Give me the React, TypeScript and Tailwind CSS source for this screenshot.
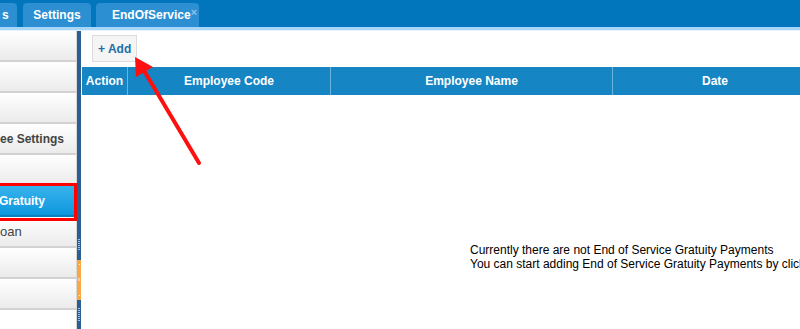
const menuItems = [
  { label: '', active: false },
  { label: '', active: false },
  { label: '', active: false },
  { label: 'ee Settings', active: false },
  { label: '', active: false },
  { label: 'Gratuity', active: true },
  { label: 'oan', active: false },
  { label: '', active: false },
  { label: '', active: false },
];

const columns = [
  { title: 'Action', width: 'w-[45px]' },
  { title: 'Employee Code', width: 'w-[203px]' },
  { title: 'Employee Name', width: 'w-[282px]' },
  { title: 'Date', width: 'w-[205px]' },
];

export default function App() {
  return (
    <div className="relative w-[800px] h-[329px] overflow-hidden bg-white font-['Liberation_Sans',Arial,sans-serif] text-[12px]">
      {/* tab strip */}
      <div className="h-[27px] bg-[#0276bd] flex items-end gap-[5px]">
        <div className="w-[17px] h-[24px] shrink-0 bg-[#2b8fd2] rounded-tr-[4px] flex items-center text-white font-bold overflow-hidden">
          <span className="ml-[2px]">s</span>
        </div>
        <div className="ml-[1px] w-[68px] h-[24px] shrink-0 bg-[#2b8fd2] rounded-t-[4px] flex items-center justify-center text-white font-bold">
          Settings
        </div>
        <div className="w-[103px] h-[24px] shrink-0 bg-[#2b8fd2] rounded-t-[4px] flex items-center text-white font-bold">
          <span className="ml-[16px]">EndOfService</span>
          <span className="ml-auto mr-[4px] mb-[6px] text-[11px] leading-none text-[#8cc3e8]">×</span>
        </div>
      </div>
      <div className="h-[3px] bg-[#a8d6f6]" />
      <div className="h-[1px] bg-[#e6f3fc]" />

      <div className="flex h-[298px]">
        {/* side menu */}
        <div className="w-[77px] shrink-0 border-r border-[#d8d8d8] flex flex-col">
          {menuItems.map((item, i) => (
            <div
              key={i}
              className={
                item.active
                  ? 'h-[31px] bg-gradient-to-b from-[#35b3ec] to-[#0a97de] border-b-2 border-[#0a7fc0] flex items-center text-white font-bold text-[12px] whitespace-nowrap overflow-hidden'
                  : 'h-[31px] bg-gradient-to-b from-white to-[#ebebeb] border-b-2 border-[#d3d1d1] flex items-center text-[#444] font-bold text-[12px] whitespace-nowrap overflow-hidden'
              }
            >
              {item.label === 'oan' ? (
                <span className="font-normal text-[#444] text-[13px]">{item.label}</span>
              ) : item.active ? (
                <span className="-ml-[1px]">{item.label}</span>
              ) : (
                item.label
              )}
            </div>
          ))}
        </div>

        {/* splitter */}
        <div className="w-[4px] shrink-0 bg-[#2c5e90] flex flex-col items-center">
          <div className="mt-[208px] h-[12px] w-[2px] bg-[repeating-linear-gradient(to_bottom,#9cc4e8_0px,#9cc4e8_1px,transparent_1px,transparent_2px)]" />
          <div className="mt-[9px] h-[40px] w-[4px] bg-[#f7a945] flex flex-col items-center justify-between py-[4px]">
            <div className="w-[1px] h-[1px] bg-white" />
            <div className="text-white text-[8px] leading-none">‹</div>
            <div className="w-[1px] h-[1px] bg-white" />
          </div>
          <div className="mt-[8px] h-[14px] w-[2px] bg-[repeating-linear-gradient(to_bottom,#9cc4e8_0px,#9cc4e8_1px,transparent_1px,transparent_2px)]" />
        </div>

        {/* content */}
        <div className="flex-1 min-w-0 overflow-hidden flex flex-col">
          <div className="pt-[4px] pl-[11px]">
            <button className="h-[27px] px-[5px] bg-[#f5f5f5] border border-[#dcdcdc] text-[#1d6ea9] font-bold text-[12px]">
              + Add
            </button>
          </div>
          <div className="mt-[5px] ml-[1px] flex h-[28px] bg-[#1585c4] text-white font-bold">
            {columns.map((c, i) => (
              <div
                key={c.title}
                className={`${c.width} shrink-0 flex items-center justify-center ${i > 0 ? 'border-l border-[#6bb4e0]' : ''}`}
              >
                {c.title}
              </div>
            ))}
          </div>
          <div className="mt-[148px] ml-[389px] text-black leading-[14px] whitespace-nowrap">
            <div>Currently there are not End of Service Gratuity Payments</div>
            <div>You can start adding End of Service Gratuity Payments by clicking the Add button</div>
          </div>
        </div>
      </div>

      {/* annotation: red box, left edge runs off the screen */}
      <div className="absolute -left-[3px] top-[183px] w-[80px] h-[38px] border-[3px] border-[#ff0000]" />

      {/* annotation: red arrow */}
      <svg className="absolute left-0 top-0 pointer-events-none" width="800" height="329">
        <line x1="199" y1="163" x2="143" y2="69" stroke="#ff1010" strokeWidth="4" strokeLinecap="round" />
        <polygon points="135,57 136,77 153,67" fill="#ff1010" />
      </svg>
    </div>
  );
}
